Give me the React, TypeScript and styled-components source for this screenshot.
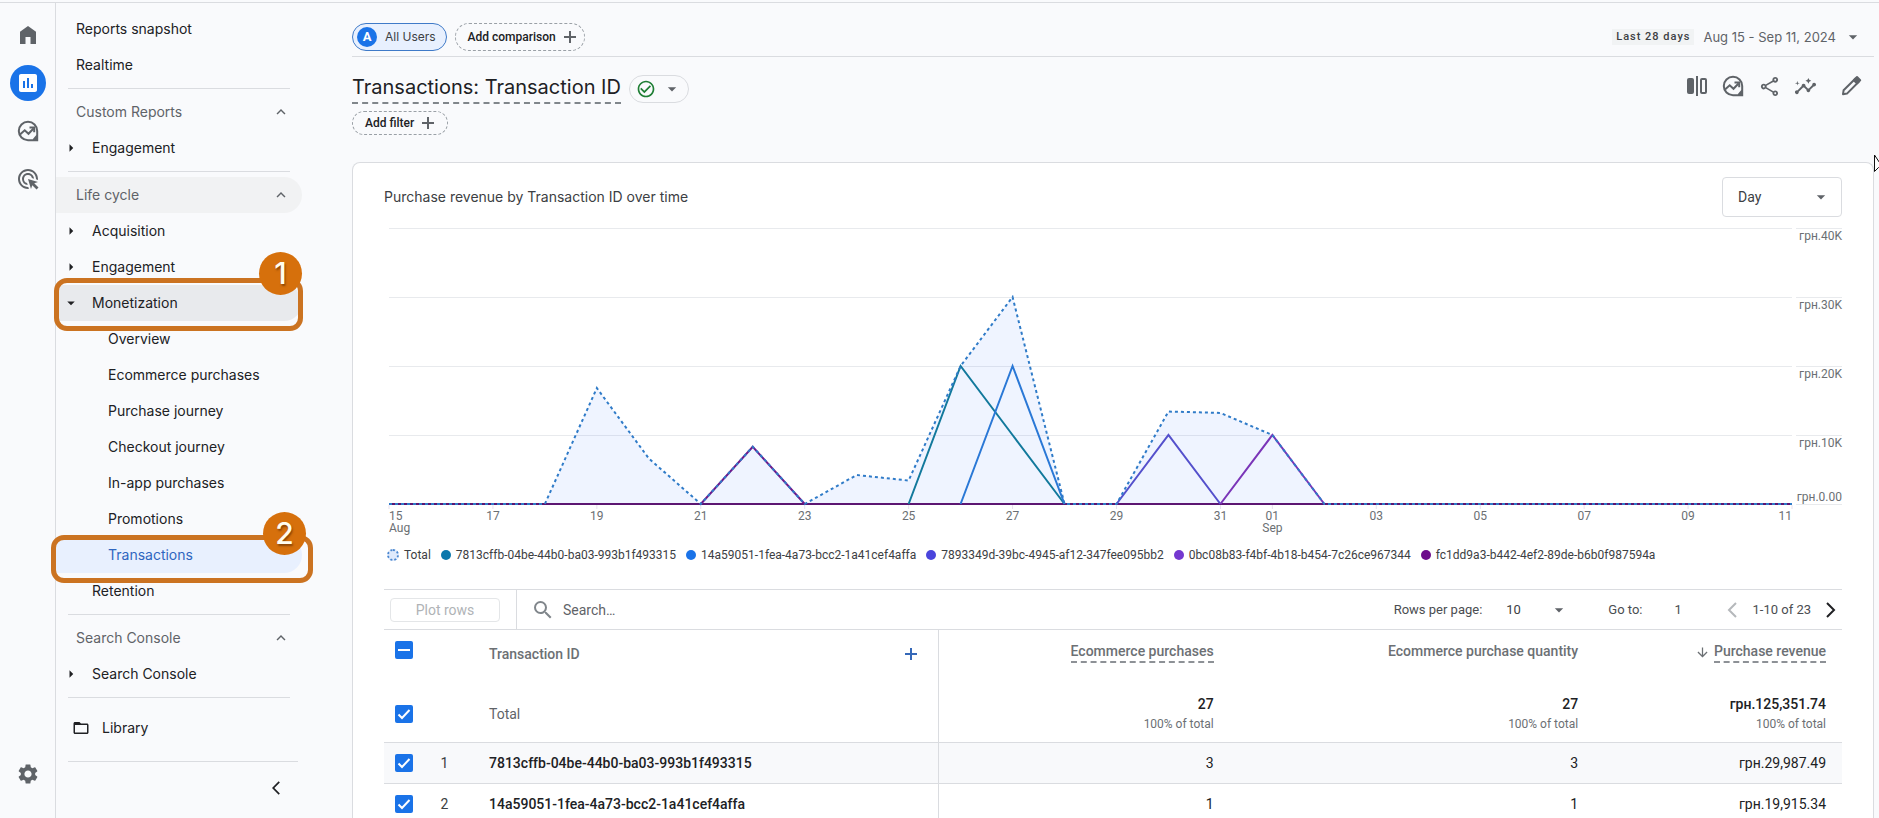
import React from 'react';
import styled, { createGlobalStyle, css } from 'styled-components';
import {
  MdAdsClick,
  MdArrowBackIosNew,
  MdArrowDownward,
  MdArrowDropDown,
  MdArrowRight,
  MdCheckCircleOutline,
  MdFolderOpen,
  MdInsertChart,
  MdInsights,
  MdKeyboardArrowUp,
  MdOutlineShare,
  MdSearch,
  MdSettings,
} from 'react-icons/md';

const brand = "Inter, 'Open Sans', sans-serif";
const body = "Roboto, 'Noto Sans', sans-serif";
const ink = '#202124';
const grey = '#5f6368';
const line = '#dadce0';
const blue = '#1a73e8';
const orange = '#cb7321';

const GlobalStyle = createGlobalStyle`
  *, *::before, *::after { box-sizing: border-box; }
  html, body, #root { height: 100%; }
  body { margin: 0; background: #f9fafc; color: ${ink}; font-family: ${body}; font-size: 14px; overflow: hidden; }
  button, input, select { font: inherit; color: inherit; margin: 0; }
  a { color: inherit; text-decoration: none; }
`;

/* ---------- shell ---------- */

const Shell = styled.div`
  display: grid;
  grid-template-columns: 56px 296px minmax(0, 1fr);
  height: 100%;
  border-top: 1px solid ${line};
  margin-top: 2px;
  position: relative;
`;

const Rail = styled.nav`
  display: flex;
  flex-direction: column;
  align-items: center;
  gap: 12px;
  padding: 14px 0 26px;
  border-right: 1px solid ${line};
`;

const RailLink = styled.a<{ $active?: boolean }>`
  display: flex;
  align-items: center;
  justify-content: center;
  width: 36px;
  height: 36px;
  border-radius: 50%;
  color: ${p => (p.$active ? '#fff' : grey)};
  background: ${p => (p.$active ? blue : 'transparent')};
  &:last-child { margin: auto 0 6px; }
`;

const Sidebar = styled.nav`
  padding: 8px 0 0;
  font: 400 14px/20px ${brand};
`;

const rowBase = css`
  display: flex;
  align-items: center;
  width: 246px;
  height: 36px;
  border: 0;
  border-radius: 0 18px 18px 0;
  text-align: left;
`;

const Item = styled.a<{ $level: number; $tone?: 'open' | 'current' }>`
  ${rowBase}
  padding-left: ${p => [20, 12, 52][p.$level]}px;
  color: ${p => (p.$tone === 'current' ? '#2f66c0' : ink)};
  background: ${p => (p.$tone === 'open' ? '#e8eaed' : p.$tone === 'current' ? '#e8f0fe' : 'transparent')};
`;

const Marker = styled.span`
  display: flex;
  justify-content: center;
  width: 24px;
  margin: 0 9px 0 -9px;
`;

const Section = styled.button<{ $shaded?: boolean }>`
  ${rowBase}
  justify-content: space-between;
  padding: 0 12px 0 20px;
  color: ${grey};
  background: ${p => (p.$shaded ? '#f1f2f3' : 'transparent')};
`;

const Divider = styled.hr<{ $wide?: boolean }>`
  width: ${p => (p.$wide ? 230 : 222)}px;
  height: 1px;
  margin: 5px 0 5px 12px;
  border: 0;
  background: ${line};
`;

const LibraryLink = styled(Item)`
  margin: 12px 0 15px;
  padding-left: 16px;
  gap: 12px;
`;

const CollapseButton = styled.button`
  display: flex;
  margin: 18px 0 0 212px;
  padding: 0;
  border: 0;
  background: none;
`;

/* ---------- numbered callouts ---------- */

const CalloutAnchor = styled.div`
  position: relative;
`;

const CalloutFrame = styled.div<{ $wide?: boolean }>`
  position: absolute;
  z-index: 2;
  top: ${p => (p.$wide ? -2 : -7)}px;
  left: ${p => (p.$wide ? -5 : -2)}px;
  width: ${p => (p.$wide ? 262 : 249)}px;
  height: ${p => (p.$wide ? 48 : 53)}px;
  border: 5px solid ${orange};
  border-radius: 13px;
  pointer-events: none;
`;

const CalloutBadge = styled.span<{ $wide?: boolean }>`
  position: absolute;
  right: ${p => (p.$wide ? 2 : -4)}px;
  top: ${p => (p.$wide ? -28 : -31)}px;
  display: flex;
  align-items: center;
  justify-content: center;
  width: 43px;
  height: 43px;
  border-radius: 50%;
  background: #d6700c;
  color: #fffdf0;
  font: 500 30px/43px ${brand};
  text-shadow: 1px 2px 2px rgba(90, 40, 0, 0.6);
`;

/* ---------- header ---------- */

const Main = styled.main`
  display: flex;
  flex-direction: column;
  min-width: 0;
  padding-right: 5px;
`;

const TopBar = styled.header`
  display: flex;
  align-items: center;
  gap: 8px;
  height: 54px;
  padding-top: 15px;
  padding-bottom: 1px;
  border-bottom: 1px solid ${line};
`;

const UsersChip = styled.button`
  display: flex;
  align-items: center;
  gap: 8px;
  height: 28px;
  padding: 0 10px 0 4px;
  border: 1px solid #3f7ac8;
  border-radius: 14px;
  background: #e8f0fe;
  color: #3c4043;
  font: 400 12px/16px ${brand};
`;

const Avatar = styled.span`
  width: 20px;
  height: 20px;
  border-radius: 50%;
  background: ${blue};
  color: #fff;
  font: 700 13px/20px ${body};
  text-align: center;
`;

const DashedChip = styled.button<{ $small?: boolean }>`
  display: flex;
  align-items: center;
  gap: 7px;
  height: ${p => (p.$small ? 24 : 28)}px;
  padding: 0 ${p => (p.$small ? 12 : 7)}px 0 12px;
  border: 1px dashed #9aa0a6;
  border-radius: 14px;
  background: transparent;
  font-size: 12px;
  font-weight: 500;
  svg { color: ${grey}; }
`;

const RangeButton = styled.button`
  display: flex;
  align-items: center;
  gap: 7px;
  margin-left: auto;
  padding: 0 11px 0 0;
  border: 0;
  background: none;
  color: ${grey};
  font: 400 13px/20px ${brand};
`;

const RangeTag = styled.span`
  margin-right: 2px;
  padding: 0 4px;
  background: #f1f3f4;
  color: #3c4043;
  font: 500 11px/16px ${body};
  letter-spacing: 1px;
`;

const TitleRow = styled.div`
  display: flex;
  align-items: flex-start;
  justify-content: space-between;
  padding-top: 15px;
`;

const TitleGroup = styled.div`
  display: flex;
  align-items: center;
  gap: 8px;
`;

const Title = styled.h1`
  margin: 0;
  border-bottom: 2px dashed #80868b;
  font: 400 20px/30px ${brand};
`;

const StatusPill = styled.button`
  display: flex;
  align-items: center;
  gap: 6px;
  height: 28px;
  margin-top: 1px;
  padding: 0 6px;
  border: 1px solid ${line};
  border-radius: 14px;
  background: transparent;
  color: ${grey};
`;

const Tools = styled.div`
  display: flex;
  align-items: center;
  padding-right: 5px;
`;

const Tool = styled.button<{ $gap?: boolean }>`
  display: flex;
  align-items: center;
  justify-content: center;
  width: 36px;
  height: 28px;
  margin-left: ${p => (p.$gap ? 10 : 0)}px;
  padding: 0;
  border: 0;
  background: none;
  color: ${grey};
`;

const FilterRow = styled.div`
  display: flex;
  padding: 7px 0 27px;
`;

/* ---------- card ---------- */

const Card = styled.section`
  flex: 1;
  padding: 14px 31px 0;
  border: 1px solid ${line};
  border-bottom: 0;
  border-radius: 8px 8px 0 0;
  background: #fff;
`;

const CardHead = styled.div`
  display: flex;
  align-items: center;
  justify-content: space-between;
  height: 40px;
`;

const CardTitle = styled.h2`
  margin: 0;
  color: #3c4043;
  font: 400 14px/20px ${brand};
`;

const SelectBox = styled.div<{ $outlined?: boolean }>`
  position: relative;
  display: flex;
  align-items: center;
  width: ${p => (p.$outlined ? 120 : 72)}px;
  height: ${p => (p.$outlined ? 40 : 36)}px;
  border: ${p => (p.$outlined ? `1px solid ${line}` : '0')};
  border-radius: 4px;
  color: #3c4043;
  select {
    width: 100%;
    height: 100%;
    padding: 0 ${p => (p.$outlined ? 15 : 8)}px;
    border: 0;
    background: none;
    appearance: none;
  }
  svg {
    position: absolute;
    right: ${p => (p.$outlined ? 10 : 1)}px;
    color: ${grey};
    pointer-events: none;
  }
`;

const ChartGrid = styled.div`
  display: grid;
  grid-template-columns: minmax(0, 1fr) 46px;
  gap: 4px;
  margin-top: 11px;
  padding-left: 5px;
  svg { display: block; width: 100%; height: 308px; overflow: visible; }
  text { font: 400 12px ${body}; fill: #6b6f73; }
`;

const Legend = styled.ul`
  display: flex;
  gap: 10px;
  margin: 9px 0 24px;
  padding: 0 0 0 3px;
  list-style: none;
  color: #3c4043;
  font-size: 12px;
  line-height: 20px;
  white-space: nowrap;
`;

const LegendItem = styled.li`
  display: flex;
  align-items: center;
  gap: 5px;
`;

const Dot = styled.span<{ $color?: string }>`
  width: ${p => (p.$color ? 10 : 12)}px;
  height: ${p => (p.$color ? 10 : 12)}px;
  border-radius: 50%;
  background: ${p => p.$color || '#dfeafc'};
  border: ${p => (p.$color ? '0' : '2px dotted #4a87d0')};
`;

/* ---------- table ---------- */

const TableBar = styled.div`
  display: flex;
  align-items: center;
  height: 41px;
  border: 1px solid ${line};
  border-width: 1px 0;
  color: #4a4d51;
  font-size: 13px;
`;

const PlotCell = styled.div`
  display: flex;
  align-items: center;
  align-self: stretch;
  width: 133px;
  padding-left: 6px;
  border-right: 1px solid ${line};
`;

const PlotButton = styled.button`
  width: 110px;
  height: 24px;
  padding: 0;
  border: 1px solid #e4e6e8;
  border-radius: 4px;
  background: none;
  font-size: 14px;
  &:disabled { color: #b0b3b6; }
`;

const SearchBox = styled.label`
  display: flex;
  flex: 1;
  align-items: center;
  gap: 8px;
  padding-left: 14px;
  color: #80868b;
  input {
    width: 240px;
    padding: 0;
    border: 0;
    outline: 0;
    background: none;
    font-size: 14px;
  }
  input::placeholder { color: ${grey}; opacity: 1; }
`;

const Pager = styled.div`
  display: flex;
  align-items: center;
  padding-right: 6px;
  white-space: nowrap;
`;

const PageSize = styled.label`
  display: flex;
  align-items: center;
  gap: 16px;
`;

const GoTo = styled.label`
  display: flex;
  align-items: center;
  gap: 32px;
  margin-left: 38px;
  input { width: 40px; padding: 0; border: 0; outline: 0; background: none; }
`;

const PageNav = styled.div`
  display: flex;
  align-items: center;
  gap: 15px;
  margin-left: 13px;
`;

const PageButton = styled.button`
  display: flex;
  padding: 0;
  border: 0;
  background: none;
  color: ${ink};
  &:disabled { color: #b5b8bb; }
`;

const Table = styled.table`
  width: 100%;
  table-layout: fixed;
  border-collapse: collapse;
  color: ${ink};
  th, td { padding: 0 16px 0 0; text-align: right; font-weight: 400; }
`;

const CheckCol = styled.col`
  width: 44px;
`;

const NumberCol = styled.col`
  width: 33px;
`;

const MetricCol = styled.col<{ $share: number }>`
  width: ${p => p.$share}%;
`;

const HeadRow = styled.tr`
  height: 56px;
  vertical-align: top;
  color: ${grey};
`;

const TotalRow = styled.tr`
  height: 56px;
`;

const DataRow = styled.tr<{ $shaded?: boolean }>`
  height: 41px;
  border-top: 1px solid ${line};
  background: ${p => (p.$shaded ? '#f8f9fb' : '#fff')};
`;

const Metric = styled.div<{ $dashed?: boolean }>`
  display: flex;
  justify-content: flex-end;
  align-items: flex-start;
  gap: 4px;
  padding-top: 12px;
  font-weight: 500;
  line-height: 19px;
  color: #6c7074;
  span { border-bottom: ${p => (p.$dashed ? '2px dashed #8d9196' : '0')}; }
  svg { margin-top: 3px; }
`;

const Dimension = styled.div`
  display: flex;
  justify-content: space-between;
  align-items: center;
  height: 20px;
  margin-top: 14px;
  color: #6c7074;
  font-weight: 500;
`;

const AddColumn = styled.button`
  display: flex;
  margin-right: 4px;
  padding: 0;
  border: 0;
  background: none;
  color: #3568b8;
`;

const CheckCell = styled.td<{ $top?: boolean }>`
  && { padding: ${p => (p.$top ? 11 : 0)}px 0 0 11px; text-align: left; }
`;

const CheckLabel = styled.label`
  display: flex;
  position: relative;
  width: 18px;
  height: 18px;
  input {
    width: 18px;
    height: 18px;
    border-radius: 2px;
    background: ${blue};
    appearance: none;
  }
  svg { position: absolute; inset: 0; pointer-events: none; }
`;

const NumberCell = styled.td`
  && { text-align: center; padding: 0; color: #3c4043; }
`;

const NameCell = styled.th<{ $strong?: boolean }>`
  && {
    text-align: left;
    border-right: 1px solid ${line};
    color: ${p => (p.$strong ? ink : grey)};
    font-weight: ${p => (p.$strong ? 500 : 400)};
  }
`;

const IndentedLabel = styled.span`
  padding-left: 28px;
`;

const TotalValue = styled.div`
  font-weight: 500;
  line-height: 20px;
`;

const Share = styled.div`
  color: #6c7074;
  font-size: 12px;
  line-height: 20px;
`;

const Cursor = styled.svg`
  position: absolute;
  z-index: 3;
  top: 151px;
  right: 0;
`;

/* ---------- icons ---------- */

const HomeIcon = () => (
  <svg width="24" height="24" viewBox="0 0 24 24" fill="currentColor">
    <path d="M4 21V8.800L12 3l8 5.800V21h-5.500v-7h-5v7z" />
  </svg>
);

const ExploreIcon = () => (
  <svg width="24" height="24" viewBox="0 0 24 24" fill="none" stroke="currentColor" strokeWidth="2">
    <path d="M12 21.200a9.200 9.200 0 1 1 9.200-9.200v9.200z" />
    <path d="M16.500 22l.8-2.600 3-3.400 1.700.5V22z" fill="currentColor" stroke="none" />
    <path d="M4 15.500l4.700-4.200 3.800 3.500 5-5.300" />
    <path d="M13.500 8.500h4.700v4.700" />
  </svg>
);

const CompareIcon = () => (
  <svg width="24" height="24" viewBox="0 0 24 24" fill="currentColor">
    <rect x="2" y="4" width="7" height="16" rx="2" />
    <rect x="11" y="2" width="2" height="20" />
    <rect x="16" y="5" width="5" height="14" rx="1" fill="none" stroke="currentColor" strokeWidth="2" />
  </svg>
);

const PencilIcon = () => (
  <svg width="24" height="24" viewBox="0 0 24 24" fill="none" stroke="currentColor" strokeWidth="2" strokeLinejoin="round">
    <path d="M4 20.200l.6-3.900L16.500 4.500l3.300 3.300L8 19.600z" />
    <path d="M14.800 6.200L18 3l3.200 3.200L18 9.400z" fill="currentColor" />
  </svg>
);

const Plus = () => (
  <svg width="14" height="14" viewBox="0 0 14 14" stroke="currentColor" strokeWidth="2" fill="none">
    <path d="M7 1v12M1 7h12" />
  </svg>
);

const Chevron = ({ left }: { left?: boolean }) => (
  <svg width="10" height="16" viewBox="0 0 10 16" fill="none" stroke="currentColor" strokeWidth="2">
    <path d={left ? 'M9 1L2 8l7 7' : 'M1 1l7 7-7 7'} />
  </svg>
);

function Check({ label, mixed }: { label: string; mixed?: boolean }) {
  return (
    <CheckLabel>
      <input type="checkbox" aria-label={label} defaultChecked />
      <svg width="18" height="18" viewBox="0 0 18 18" fill="none" stroke="#fff" strokeWidth="2">
        <path d={mixed ? 'M3 9h12' : 'M3.500 9.500l3.500 3.500 7.500-8'} />
      </svg>
    </CheckLabel>
  );
}

/* ---------- chart ---------- */

const LAST_DAY = 27;
const MAX = 40;
const PLOT_H = 276;

const totals = [0, 0, 0, 0, 16.8, 6.6, 0, 8.3, 0, 4.2, 3.4, 20, 30, 0, 0, 13.4, 13.2, 10, 0, 0, 0, 0, 0, 0, 0, 0, 0, 0];

type Peak = { color: string; points: [number, number][] };
const peaks: Peak[] = [
  { color: '#6f1a8c', points: [[6, 0], [7, 8.3], [8, 0]] },
  { color: '#12799c', points: [[10, 0], [11, 20], [12, 10], [13, 0]] },
  { color: '#2a78d6', points: [[11, 0], [12, 20], [13, 0]] },
  { color: '#5450cc', points: [[14, 0], [15, 10], [16, 0]] },
  { color: '#7a35b8', points: [[16, 0], [17, 10], [18, 0]] },
];

const toPoints = (pts: [number, number][]) => pts.map(([d, v]) => `${d * 100},${((MAX - v) / MAX) * PLOT_H}`).join(' ');
const totalPoints = toPoints(totals.map((v, d) => [d, v] as [number, number]));

const ticks = [
  [0, '15'], [2, '17'], [4, '19'], [6, '21'], [8, '23'], [10, '25'], [12, '27'], [14, '29'],
  [16, '31'], [17, '01'], [19, '03'], [21, '05'], [23, '07'], [25, '09'], [27, '11'],
] as [number, string][];

const levels = [40, 30, 20, 10, 0];
// Half-pixel centres keep the one-pixel grid lines crisp.
const levelY = (v: number) => Math.round(((MAX - v) / MAX) * PLOT_H) + 0.5;
const pct = (day: number) => `${(day / LAST_DAY) * 100}%`;
const anchor = (day: number) => (day === 0 ? 'start' : day === LAST_DAY ? 'end' : 'middle');

function Chart() {
  return (
    <ChartGrid>
      <svg role="img" aria-label="Purchase revenue by Transaction ID over time">
        {levels.map(v => (
          <line key={v} x1="0" x2="100%" y1={levelY(v)} y2={levelY(v)} stroke="#e8eaed" />
        ))}
        {ticks.map(([d]) => (
          <line key={d} x1={pct(d)} x2={pct(d)} y1={277} y2={281} stroke="#e8e0ee" />
        ))}
        <svg x="0" y="0" width="100%" height={PLOT_H} viewBox={`0 0 ${LAST_DAY * 100} ${PLOT_H}`} preserveAspectRatio="none" style={{ height: PLOT_H }}>
          <g fill="none" strokeWidth="2">
            <polygon points={`0,${PLOT_H} ${totalPoints} ${LAST_DAY * 100},${PLOT_H}`} fill="#4a84fa" fillOpacity="0.09" />
            <line x1="0" x2={LAST_DAY * 100} y1={PLOT_H} y2={PLOT_H} stroke="#5c1672" vectorEffect="non-scaling-stroke" />
            {peaks.map(p => (
              <polyline key={p.color} points={toPoints(p.points)} stroke={p.color} vectorEffect="non-scaling-stroke" />
            ))}
            <polyline points={totalPoints} stroke="#2f7bc8" strokeDasharray="3 3" vectorEffect="non-scaling-stroke" />
          </g>
        </svg>
        {ticks.map(([d, label]) => (
          <text key={d} x={pct(d)} y="292" textAnchor={anchor(d)}>{label}</text>
        ))}
        <text x="0" y="304">Aug</text>
        <text x={pct(17)} y="304" textAnchor="middle">Sep</text>
      </svg>
      <svg aria-hidden="true">
        {levels.map(v => (
          <g key={v}>
            <line x1="0" x2="100%" y1={levelY(v)} y2={levelY(v)} stroke="#e8eaed" />
            <text x="100%" y={v ? levelY(v) + 11 : levelY(v) - 4} textAnchor="end">{v ? `грн.${v}K` : 'грн.0.00'}</text>
          </g>
        ))}
      </svg>
    </ChartGrid>
  );
}

const legend = [
  { id: '7813cffb-04be-44b0-ba03-993b1f493315', color: '#0b78ac' },
  { id: '14a59051-1fea-4a73-bcc2-1a41cef4affa', color: '#1a73e8' },
  { id: '7893349d-39bc-4945-af12-347fee095bb2', color: '#4a45dc' },
  { id: '0bc08b83-f4bf-4b18-b454-7c26ce967344', color: '#7438d0' },
  { id: 'fc1dd9a3-b442-4ef2-89de-b6b0f987594a', color: '#6e0b8c' },
];

const rows = [
  { id: '7813cffb-04be-44b0-ba03-993b1f493315', count: 3, quantity: 3, revenue: 'грн.29,987.49' },
  { id: '14a59051-1fea-4a73-bcc2-1a41cef4affa', count: 1, quantity: 1, revenue: 'грн.19,915.34' },
];

/* ---------- sidebar pieces ---------- */

function Group({ label, open }: { label: string; open?: boolean }) {
  return (
    <Item href="#" $level={1} $tone={open ? 'open' : undefined}>
      <Marker>{open ? <MdArrowDropDown size={18} /> : <MdArrowRight size={18} />}</Marker>
      {label}
    </Item>
  );
}

function SectionHead({ label, shaded }: { label: string; shaded?: boolean }) {
  return (
    <Section $shaded={shaded}>
      {label}
      <MdKeyboardArrowUp size={18} />
    </Section>
  );
}

function Callout({ n, wide, children }: { n: number; wide?: boolean; children: React.ReactNode }) {
  return (
    <CalloutAnchor>
      {children}
      <CalloutFrame $wide={wide}>
        <CalloutBadge $wide={wide}>{n}</CalloutBadge>
      </CalloutFrame>
    </CalloutAnchor>
  );
}

export default function App() {
  return (
    <>
      <GlobalStyle />
      <Shell>
        <Rail aria-label="Workspaces">
          <RailLink href="#" aria-label="Home"><HomeIcon /></RailLink>
          <RailLink href="#" aria-label="Reports" $active><MdInsertChart size={24} /></RailLink>
          <RailLink href="#" aria-label="Explore"><ExploreIcon /></RailLink>
          <RailLink href="#" aria-label="Advertising"><MdAdsClick size={24} /></RailLink>
          <RailLink href="#" aria-label="Admin"><MdSettings size={24} /></RailLink>
        </Rail>

        <Sidebar aria-label="Reports">
          <Item href="#" $level={0}>Reports snapshot</Item>
          <Item href="#" $level={0}>Realtime</Item>
          <Divider />
          <SectionHead label="Custom Reports" />
          <Group label="Engagement" />
          <Divider />
          <SectionHead label="Life cycle" shaded />
          <Group label="Acquisition" />
          <Group label="Engagement" />
          <Callout n={1}><Group label="Monetization" open /></Callout>
          <Item href="#" $level={2}>Overview</Item>
          <Item href="#" $level={2}>Ecommerce purchases</Item>
          <Item href="#" $level={2}>Purchase journey</Item>
          <Item href="#" $level={2}>Checkout journey</Item>
          <Item href="#" $level={2}>In-app purchases</Item>
          <Item href="#" $level={2}>Promotions</Item>
          <Callout n={2} wide><Item href="#" $level={2} $tone="current">Transactions</Item></Callout>
          <Item href="#" $level={1}><Marker />Retention</Item>
          <Divider />
          <SectionHead label="Search Console" />
          <Group label="Search Console" />
          <Divider />
          <LibraryLink href="#" $level={0}><MdFolderOpen size={18} />Library</LibraryLink>
          <Divider $wide />
          <CollapseButton aria-label="Collapse menu"><MdArrowBackIosNew size={16} /></CollapseButton>
        </Sidebar>

        <Main>
          <TopBar>
            <UsersChip><Avatar>A</Avatar>All Users</UsersChip>
            <DashedChip>Add comparison<Plus /></DashedChip>
            <RangeButton>
              <RangeTag>Last 28 days</RangeTag>
              Aug 15 - Sep 11, 2024
              <MdArrowDropDown size={20} />
            </RangeButton>
          </TopBar>

          <TitleRow>
            <TitleGroup>
              <Title>Transactions: Transaction ID</Title>
              <StatusPill aria-label="Data quality">
                <MdCheckCircleOutline size={20} color="#1e7e34" />
                <MdArrowDropDown size={20} />
              </StatusPill>
            </TitleGroup>
            <Tools>
              <Tool aria-label="Edit comparisons"><CompareIcon /></Tool>
              <Tool aria-label="Explore"><ExploreIcon /></Tool>
              <Tool aria-label="Share"><MdOutlineShare size={23} /></Tool>
              <Tool aria-label="Insights"><MdInsights size={23} /></Tool>
              <Tool aria-label="Customize report" $gap><PencilIcon /></Tool>
            </Tools>
          </TitleRow>

          <FilterRow>
            <DashedChip $small>Add filter<Plus /></DashedChip>
          </FilterRow>

          <Card>
            <CardHead>
              <CardTitle>Purchase revenue by Transaction ID over time</CardTitle>
              <SelectBox $outlined>
                <select aria-label="Granularity" defaultValue="Day"><option>Day</option></select>
                <MdArrowDropDown size={20} />
              </SelectBox>
            </CardHead>

            <Chart />

            <Legend>
              <LegendItem><Dot />Total</LegendItem>
              {legend.map(l => (
                <LegendItem key={l.id}><Dot $color={l.color} />{l.id}</LegendItem>
              ))}
            </Legend>

            <TableBar>
              <PlotCell><PlotButton disabled>Plot rows</PlotButton></PlotCell>
              <SearchBox>
                <MdSearch size={24} />
                <input type="text" placeholder="Search…" aria-label="Search" />
              </SearchBox>
              <Pager>
                <PageSize>
                  Rows per page:
                  <SelectBox>
                    <select defaultValue="10"><option>10</option></select>
                    <MdArrowDropDown size={20} />
                  </SelectBox>
                </PageSize>
                <GoTo>Go to:<input type="text" defaultValue="1" /></GoTo>
                <PageNav>
                  <PageButton aria-label="Previous page" disabled><Chevron left /></PageButton>
                  1-10 of 23
                  <PageButton aria-label="Next page"><Chevron /></PageButton>
                </PageNav>
              </Pager>
            </TableBar>

            <Table>
              <colgroup>
                <CheckCol />
                <NumberCol />
                <col />
                <MetricCol $share={20} />
                <MetricCol $share={25} />
                <MetricCol $share={17} />
              </colgroup>
              <thead>
                <HeadRow>
                  <CheckCell $top><Check label="Select all rows" mixed /></CheckCell>
                  <td />
                  <NameCell scope="col">
                    <Dimension>
                      <IndentedLabel>Transaction ID</IndentedLabel>
                      <AddColumn aria-label="Add dimension"><Plus /></AddColumn>
                    </Dimension>
                  </NameCell>
                  <th scope="col"><Metric $dashed><span>Ecommerce purchases</span></Metric></th>
                  <th scope="col"><Metric><span>Ecommerce purchase quantity</span></Metric></th>
                  <th scope="col"><Metric $dashed><MdArrowDownward size={15} /><span>Purchase revenue</span></Metric></th>
                </HeadRow>
              </thead>
              <tbody>
                <TotalRow>
                  <CheckCell><Check label="Plot total" /></CheckCell>
                  <td />
                  <NameCell scope="row"><IndentedLabel>Total</IndentedLabel></NameCell>
                  {['27', '27', 'грн.125,351.74'].map((v, i) => (
                    <td key={i}><TotalValue>{v}</TotalValue><Share>100% of total</Share></td>
                  ))}
                </TotalRow>
                {rows.map((r, i) => (
                  <DataRow key={r.id} $shaded={i % 2 === 0}>
                    <CheckCell><Check label={`Plot row ${i + 1}`} /></CheckCell>
                    <NumberCell>{i + 1}</NumberCell>
                    <NameCell scope="row" $strong><IndentedLabel>{r.id}</IndentedLabel></NameCell>
                    <td>{r.count}</td>
                    <td>{r.quantity}</td>
                    <td>{r.revenue}</td>
                  </DataRow>
                ))}
              </tbody>
            </Table>
          </Card>
        </Main>

        <Cursor width="5" height="20" viewBox="0 0 5 20" aria-hidden="true">
          <path d="M.5 1v16.500l4-4 5 1L.5 1z" fill="#fff" stroke="#111" />
        </Cursor>
      </Shell>
    </>
  );
}
